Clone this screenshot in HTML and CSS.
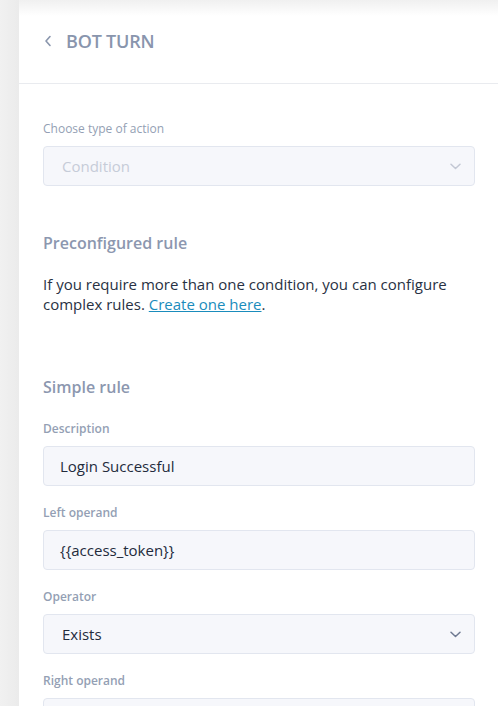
FILE: index.html
```html
<!DOCTYPE html>
<html lang="en">
<head>
    <meta charset="UTF-8">
    <meta name="viewport" content="width=device-width, initial-scale=1.0">
    <title>Bot Turn</title>
    <link rel="stylesheet" href="styles.css">
</head>
<body>
<div class="layout">
    <div class="backdrop"></div>
    <aside class="panel">
        <header class="panel-header">
            <button class="back" type="button" aria-label="Back">
                <svg width="8" height="12" viewBox="0 0 8 12"><path d="M6 1.5 L2 6 L6 10.5" fill="none" stroke="#8a96ad" stroke-width="1.6" stroke-linecap="round" stroke-linejoin="round"/></svg>
            </button>
            <h1>BOT TURN</h1>
        </header>

        <div class="panel-body">
            <div class="field">
                <label class="label-plain" for="actionType">Choose type of action</label>
                <div class="select disabled" id="actionType">
                    <span>Condition</span>
                    <svg class="caret" width="11" height="7" viewBox="0 0 11 7"><path d="M1 1.2 L5.5 5.5 L10 1.2" fill="none" stroke="currentColor" stroke-width="1.5" stroke-linecap="round" stroke-linejoin="round"/></svg>
                </div>
            </div>

            <h2 class="section-title">Preconfigured rule</h2>
            <p class="hint">If you require more than one condition, you can configure complex rules. <a href="#">Create one here</a>.</p>

            <h2 class="section-title simple">Simple rule</h2>

            <div class="field">
                <label for="description">Description</label>
                <div class="input" id="description">Login Successful</div>
            </div>
            <div class="field">
                <label for="leftOperand">Left operand</label>
                <div class="input" id="leftOperand">{{access_token}}</div>
            </div>
            <div class="field">
                <label for="operator">Operator</label>
                <div class="select" id="operator">
                    <span>Exists</span>
                    <svg class="caret" width="11" height="7" viewBox="0 0 11 7"><path d="M1 1.2 L5.5 5.5 L10 1.2" fill="none" stroke="currentColor" stroke-width="1.5" stroke-linecap="round" stroke-linejoin="round"/></svg>
                </div>
            </div>
            <div class="field">
                <label for="rightOperand">Right operand</label>
                <div class="input" id="rightOperand"></div>
            </div>
        </div>
    </aside>
</div>
</body>
</html>
```

FILE: styles.css
```css
html, body {
    margin: 0;
    height: 100%;
    overflow: hidden;
}
body {
    font-family: "Open Sans", "Noto Sans", Arial, sans-serif;
    background: #ececec;
}
.layout {
    display: flex;
    height: 100%;
}
.backdrop {
    width: 19px;
    flex: none;
    background: linear-gradient(to right, #f1f1f1, #ebebeb);
}
.panel {
    flex: 1;
    background: #fff;
    position: relative;
}
/* soft shade along the top edge */
.panel::before {
    content: "";
    position: absolute;
    left: 0;
    right: 0;
    top: 0;
    height: 16px;
    background: linear-gradient(to bottom, #f0f0f0, rgba(255, 255, 255, 0));
}
.panel-header {
    height: 84px;
    border-bottom: 1px solid #e9ebef;
    display: flex;
    align-items: center;
    padding-left: 25px;
    padding-bottom: 2px;
    box-sizing: border-box;
    position: relative;
}
.back {
    background: none;
    border: none;
    padding: 0;
    margin: 0 14px 0 0;
    display: flex;
    width: 8px;
    height: 12px;
}
.panel-header h1 {
    margin: 0;
    font-size: 18px;
    font-weight: 600;
    color: #8995ad;
    letter-spacing: -0.2px;
}
.panel-body {
    padding: 37px 23px 0 24px;
}
.field {
    margin-bottom: 19px;
}
.field label {
    display: block;
    font-size: 12px;
    line-height: 16px;
    font-weight: 600;
    color: #949fb4;
    margin-bottom: 9px;
}
.field .label-plain {
    font-weight: 400;
}
.input, .select {
    height: 40px;
    box-sizing: border-box;
    background: #f6f7fb;
    border: 1px solid #e2e6ef;
    border-radius: 4px;
    padding: 0 16px;
    font-size: 15px;
    color: #232b3c;
    display: flex;
    align-items: center;
}
.select {
    justify-content: space-between;
    padding-left: 18px;
    padding-right: 13px;
}
.select .caret {
    color: #6f7a92;
}
.select.disabled {
    color: #c6ccd8;
}
.select.disabled .caret {
    color: #c3c8d4;
}
.section-title {
    margin: 46px 0 0;
    font-size: 16px;
    line-height: 22px;
    font-weight: 600;
    color: #8c97af;
}
.section-title.simple {
    margin-top: 62px;
    margin-bottom: 23px;
}
.hint {
    margin: 20px 0 0;
    font-size: 15px;
    line-height: 20px;
    color: #283143;
}
.hint a {
    color: #1a8cbc;
}
```
